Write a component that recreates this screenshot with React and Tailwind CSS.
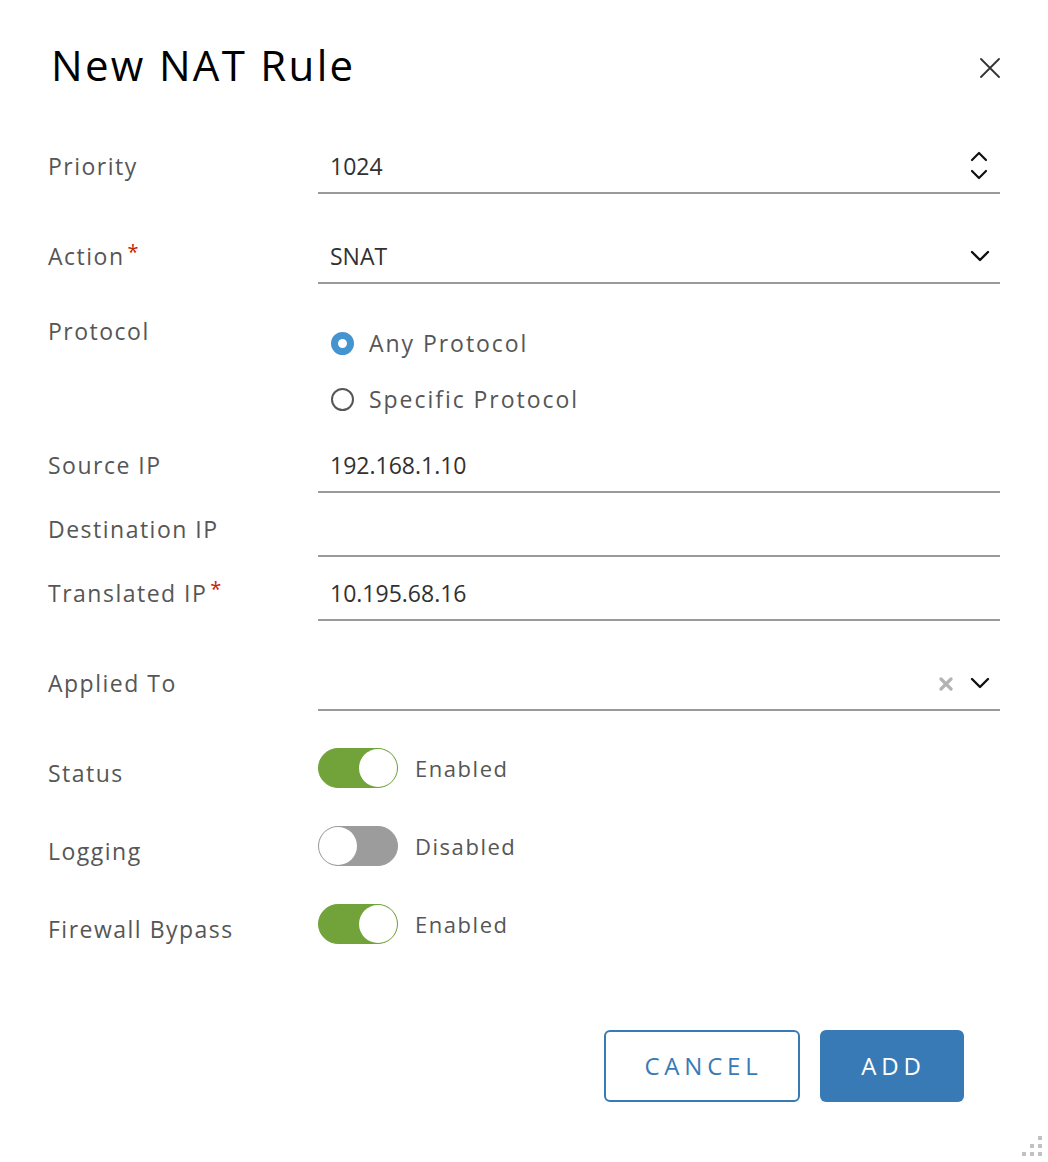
import React from 'react';

const labelCls = "text-[23px] text-[#565656] tracking-[0.065em]";

function Required() {
  return <span className="text-[#c92100] text-[20px] ml-[3px] relative -top-[4px]">*</span>;
}

function Field({ value, children }) {
  return (
    <div className="h-[54px] border-b-2 border-[#9a9a9a] flex items-center pl-[12px] pr-[10px]">
      <span className="flex-1 text-[23px] text-[#313131] tracking-[0em]">{value}</span>
      {children}
    </div>
  );
}

function Chevron() {
  return (
    <svg width="20" height="12" viewBox="0 0 20 12" fill="none" stroke="#111" strokeWidth="2.4" strokeLinecap="round" strokeLinejoin="round">
      <path d="M2 2 L10 10 L18 2" />
    </svg>
  );
}

function Toggle({ on }) {
  return (
    <div className={on
      ? "w-[80px] h-[40px] rounded-full bg-[#72a33b] border border-[#72a33b] flex items-center justify-end"
      : "w-[80px] h-[40px] rounded-full bg-[#9c9c9c] border border-[#9c9c9c] flex items-center justify-start"}>
      <div className="w-[38px] h-[38px] rounded-full bg-white" />
    </div>
  );
}

function Radio({ checked, label }) {
  return (
    <div className="h-[40px] flex items-center gap-[15px] pl-[13px]">
      {checked ? (
        <div className="w-[23px] h-[23px] rounded-full border-[7px] border-[#4694cf] bg-white" />
      ) : (
        <div className="w-[23px] h-[23px] rounded-full border-2 border-[#565656] bg-white" />
      )}
      <span className="text-[23px] text-[#565656] tracking-[0.085em]">{label}</span>
    </div>
  );
}

function SwitchRow({ label, on, first }) {
  const mt = first ? "mt-[37px]" : "mt-[38px]";
  return (
    <>
      <div className={`${labelCls} ${mt} h-[40px] flex items-center translate-y-[5px]`}>{label}</div>
      <div className={`${mt} flex items-center gap-[17px]`}>
        <Toggle on={on} />
        <span className="text-[22px] text-[#565656] tracking-[0.07em]">
          {on ? "Enabled" : "Disabled"}
        </span>
      </div>
    </>
  );
}

export default function App() {
  return (
    <div className="relative w-[1048px] h-[1162px] bg-white font-['Open_Sans',sans-serif] overflow-hidden">
      {/* Header */}
      <div className="flex items-start justify-between pl-[51px] pr-[48px] pt-[39px]">
        <h2 className="text-[42px] leading-[52px] text-black tracking-[0.055em]">New NAT Rule</h2>
        <button className="mt-[19px]">
          <svg width="20" height="20" viewBox="0 0 20 20" stroke="#333" strokeWidth="1.8" strokeLinecap="round">
            <path d="M1 1 L19 19 M19 1 L1 19" />
          </svg>
        </button>
      </div>

      {/* Form */}
      <div className="grid grid-cols-[270px_682px] px-[48px] mt-[49px]">
        {/* Priority */}
        <div className={`${labelCls} h-[52px] flex items-center`}>Priority</div>
        <Field value="1024">
          <svg width="18" height="30" viewBox="0 0 18 30" fill="none" stroke="#111" strokeWidth="2.2" strokeLinecap="round" strokeLinejoin="round" className="mr-[2px]">
            <path d="M2 9 L9 2 L16 9" />
            <path d="M2 20 L9 27 L16 20" />
          </svg>
        </Field>

        {/* Action */}
        <div className={`${labelCls} h-[52px] flex items-center mt-[36px]`}>Action<Required /></div>
        <div className="mt-[36px]">
          <Field value="SNAT"><Chevron /></Field>
        </div>

        {/* Protocol */}
        <div className={`${labelCls} h-[16px] leading-[16px] flex items-center mt-[39px]`}>Protocol</div>
        <div className="mt-[39px] flex flex-col gap-[16px]">
          <Radio checked label="Any Protocol" />
          <Radio label="Specific Protocol" />
        </div>

        {/* Source IP */}
        <div className={`${labelCls} h-[52px] flex items-center mt-[20px]`}>Source IP</div>
        <div className="mt-[20px]"><Field value="192.168.1.10" /></div>

        {/* Destination IP */}
        <div className={`${labelCls} h-[52px] flex items-center mt-[10px]`}>Destination IP</div>
        <div className="mt-[10px]"><Field value="" /></div>

        {/* Translated IP */}
        <div className={`${labelCls} h-[52px] flex items-center mt-[10px]`}>Translated IP<Required /></div>
        <div className="mt-[10px]"><Field value="10.195.68.16" /></div>

        {/* Applied To */}
        <div className={`${labelCls} h-[52px] flex items-center mt-[36px]`}>Applied To</div>
        <div className="mt-[36px]">
          <Field value="">
            <svg width="14" height="14" viewBox="0 0 14 14" stroke="#b3b3b3" strokeWidth="3.2" strokeLinecap="round" className="mr-[17px] mt-[2px]">
              <path d="M2 2 L12 12 M12 2 L2 12" />
            </svg>
            <Chevron />
          </Field>
        </div>

        <SwitchRow label="Status" on first />
        <SwitchRow label="Logging" />
        <SwitchRow label="Firewall Bypass" on />
      </div>

      {/* Footer */}
      <div className="flex justify-end gap-[20px] pr-[84px] mt-[86px]">
        <button className="w-[196px] h-[72px] rounded-[6px] border-2 border-[#387ab5] bg-white text-[#387ab5] text-[24px] font-medium tracking-[0.2em] pl-[3px]">
          CANCEL
        </button>
        <button className="w-[144px] h-[72px] rounded-[6px] bg-[#387ab5] text-white text-[24px] font-medium tracking-[0.2em] pl-[3px]">
          ADD
        </button>
      </div>

      {/* Resize grip */}
      <svg width="24" height="24" viewBox="0 0 24 24" className="absolute right-[3px] bottom-[3px]" fill="#c2c2c2">
        <rect x="17" y="1" width="4" height="4" />
        <rect x="9" y="9" width="4" height="4" />
        <rect x="17" y="9" width="4" height="4" />
        <rect x="1" y="17" width="4" height="4" />
        <rect x="9" y="17" width="4" height="4" />
        <rect x="17" y="17" width="4" height="4" />
      </svg>
    </div>
  );
}
